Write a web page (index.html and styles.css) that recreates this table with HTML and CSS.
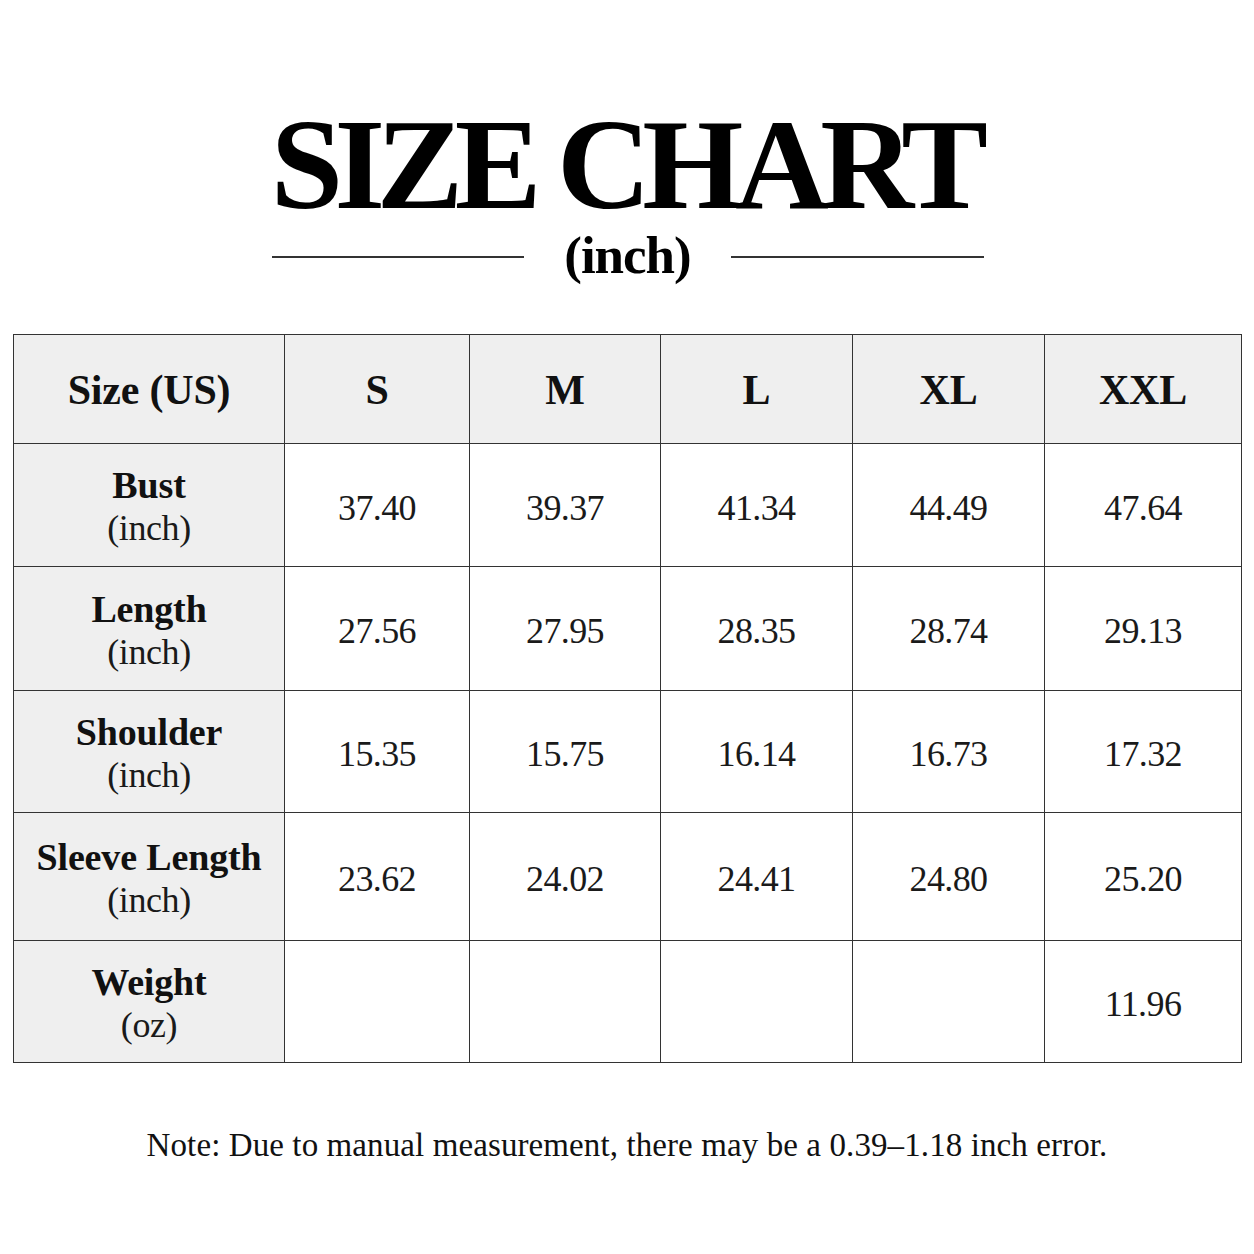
FILE: index.html
```html
<!DOCTYPE html>
<html lang="en">
<head>
<meta charset="utf-8">
<title>Size Chart</title>
<link rel="stylesheet" href="styles.css">
</head>
<body>
<main class="page">
  <h1 class="title">SIZE CHART</h1>
  <div class="subtitle-row">
    <span class="rule"></span>
    <span class="subtitle">(inch)</span>
    <span class="rule"></span>
  </div>

  <div class="chart">
    <div class="cell head first"><span class="head-text">Size (US)</span></div>
    <div class="cell head"><span class="head-text">S</span></div>
    <div class="cell head"><span class="head-text">M</span></div>
    <div class="cell head"><span class="head-text">L</span></div>
    <div class="cell head"><span class="head-text">XL</span></div>
    <div class="cell head last"><span class="head-text">XXL</span></div>

    <div class="cell label"><span class="label-main">Bust</span><span class="label-unit">(inch)</span></div>
    <div class="cell data">37.40</div>
    <div class="cell data">39.37</div>
    <div class="cell data">41.34</div>
    <div class="cell data">44.49</div>
    <div class="cell data">47.64</div>

    <div class="cell label"><span class="label-main">Length</span><span class="label-unit">(inch)</span></div>
    <div class="cell data">27.56</div>
    <div class="cell data">27.95</div>
    <div class="cell data">28.35</div>
    <div class="cell data">28.74</div>
    <div class="cell data">29.13</div>

    <div class="cell label"><span class="label-main">Shoulder</span><span class="label-unit">(inch)</span></div>
    <div class="cell data">15.35</div>
    <div class="cell data">15.75</div>
    <div class="cell data">16.14</div>
    <div class="cell data">16.73</div>
    <div class="cell data">17.32</div>

    <div class="cell label"><span class="label-main">Sleeve Length</span><span class="label-unit">(inch)</span></div>
    <div class="cell data">23.62</div>
    <div class="cell data">24.02</div>
    <div class="cell data">24.41</div>
    <div class="cell data">24.80</div>
    <div class="cell data">25.20</div>

    <div class="cell label"><span class="label-main">Weight</span><span class="label-unit">(oz)</span></div>
    <div class="cell data"></div>
    <div class="cell data"></div>
    <div class="cell data"></div>
    <div class="cell data"></div>
    <div class="cell data">11.96</div>
  </div>

  <p class="note">Note: Due to manual measurement, there may be a 0.39–1.18 inch error.</p>
</main>
</body>
</html>
```

FILE: styles.css
```css
* {
  box-sizing: border-box;
}

html, body {
  margin: 0;
  padding: 0;
  background: #ffffff;
}

body {
  font-family: "Liberation Serif", "Times New Roman", serif;
  color: #111111;
}

.page {
  width: 1254px;
  height: 1254px;
  padding-top: 99px;
  display: flex;
  flex-direction: column;
  align-items: center;
}

.title {
  margin: 0;
  font-size: 130px;
  line-height: 1;
  font-weight: 700;
  letter-spacing: -8.5px;
  margin-right: 4px;
  color: #000000;
}

.subtitle-row {
  display: flex;
  align-items: center;
  gap: 40px;
  width: 712px;
  margin-left: 1px;
}

.rule {
  flex: 1;
  height: 1.5px;
  background: #333333;
  margin-top: 3px;
}

.subtitle {
  font-size: 53px;
  line-height: 1;
  font-weight: 700;
  letter-spacing: -1px;
  color: #000000;
}

.chart {
  margin-top: 52px;
  align-self: flex-start;
  margin-left: 13px;
  display: grid;
  grid-template-columns: 271px 185px 191px 192px 192px 197px;
  grid-template-rows: 109px 123px 124px 122px 128px 122px;
  border-top: 1.5px solid #333333;
  border-left: 1.5px solid #333333;
}

.cell {
  border-right: 1.5px solid #333333;
  border-bottom: 1.5px solid #333333;
  display: flex;
  flex-direction: column;
  align-items: center;
  justify-content: center;
  text-align: center;
}

.head {
  background: #efefef;
  padding-top: 2px;
}

.head-text {
  font-size: 42px;
  line-height: 1;
  font-weight: 700;
  letter-spacing: -0.2px;
  color: #111111;
}

.label {
  background: #efefef;
  padding-top: 4px;
}

.label-main {
  font-size: 38px;
  line-height: 43px;
  font-weight: 700;
  letter-spacing: -0.15px;
  color: #111111;
}

.label-unit {
  font-size: 36px;
  line-height: 43px;
  font-weight: 400;
  letter-spacing: -0.4px;
  color: #1a1a1a;
}

.data {
  background: #ffffff;
  font-size: 36px;
  line-height: 1;
  letter-spacing: -0.6px;
  color: #1a1a1a;
  padding-top: 5px;
}

.note {
  margin: 66px 0 0;
  font-size: 33px;
  line-height: 1;
  letter-spacing: 0.1px;
  color: #111111;
}
```
